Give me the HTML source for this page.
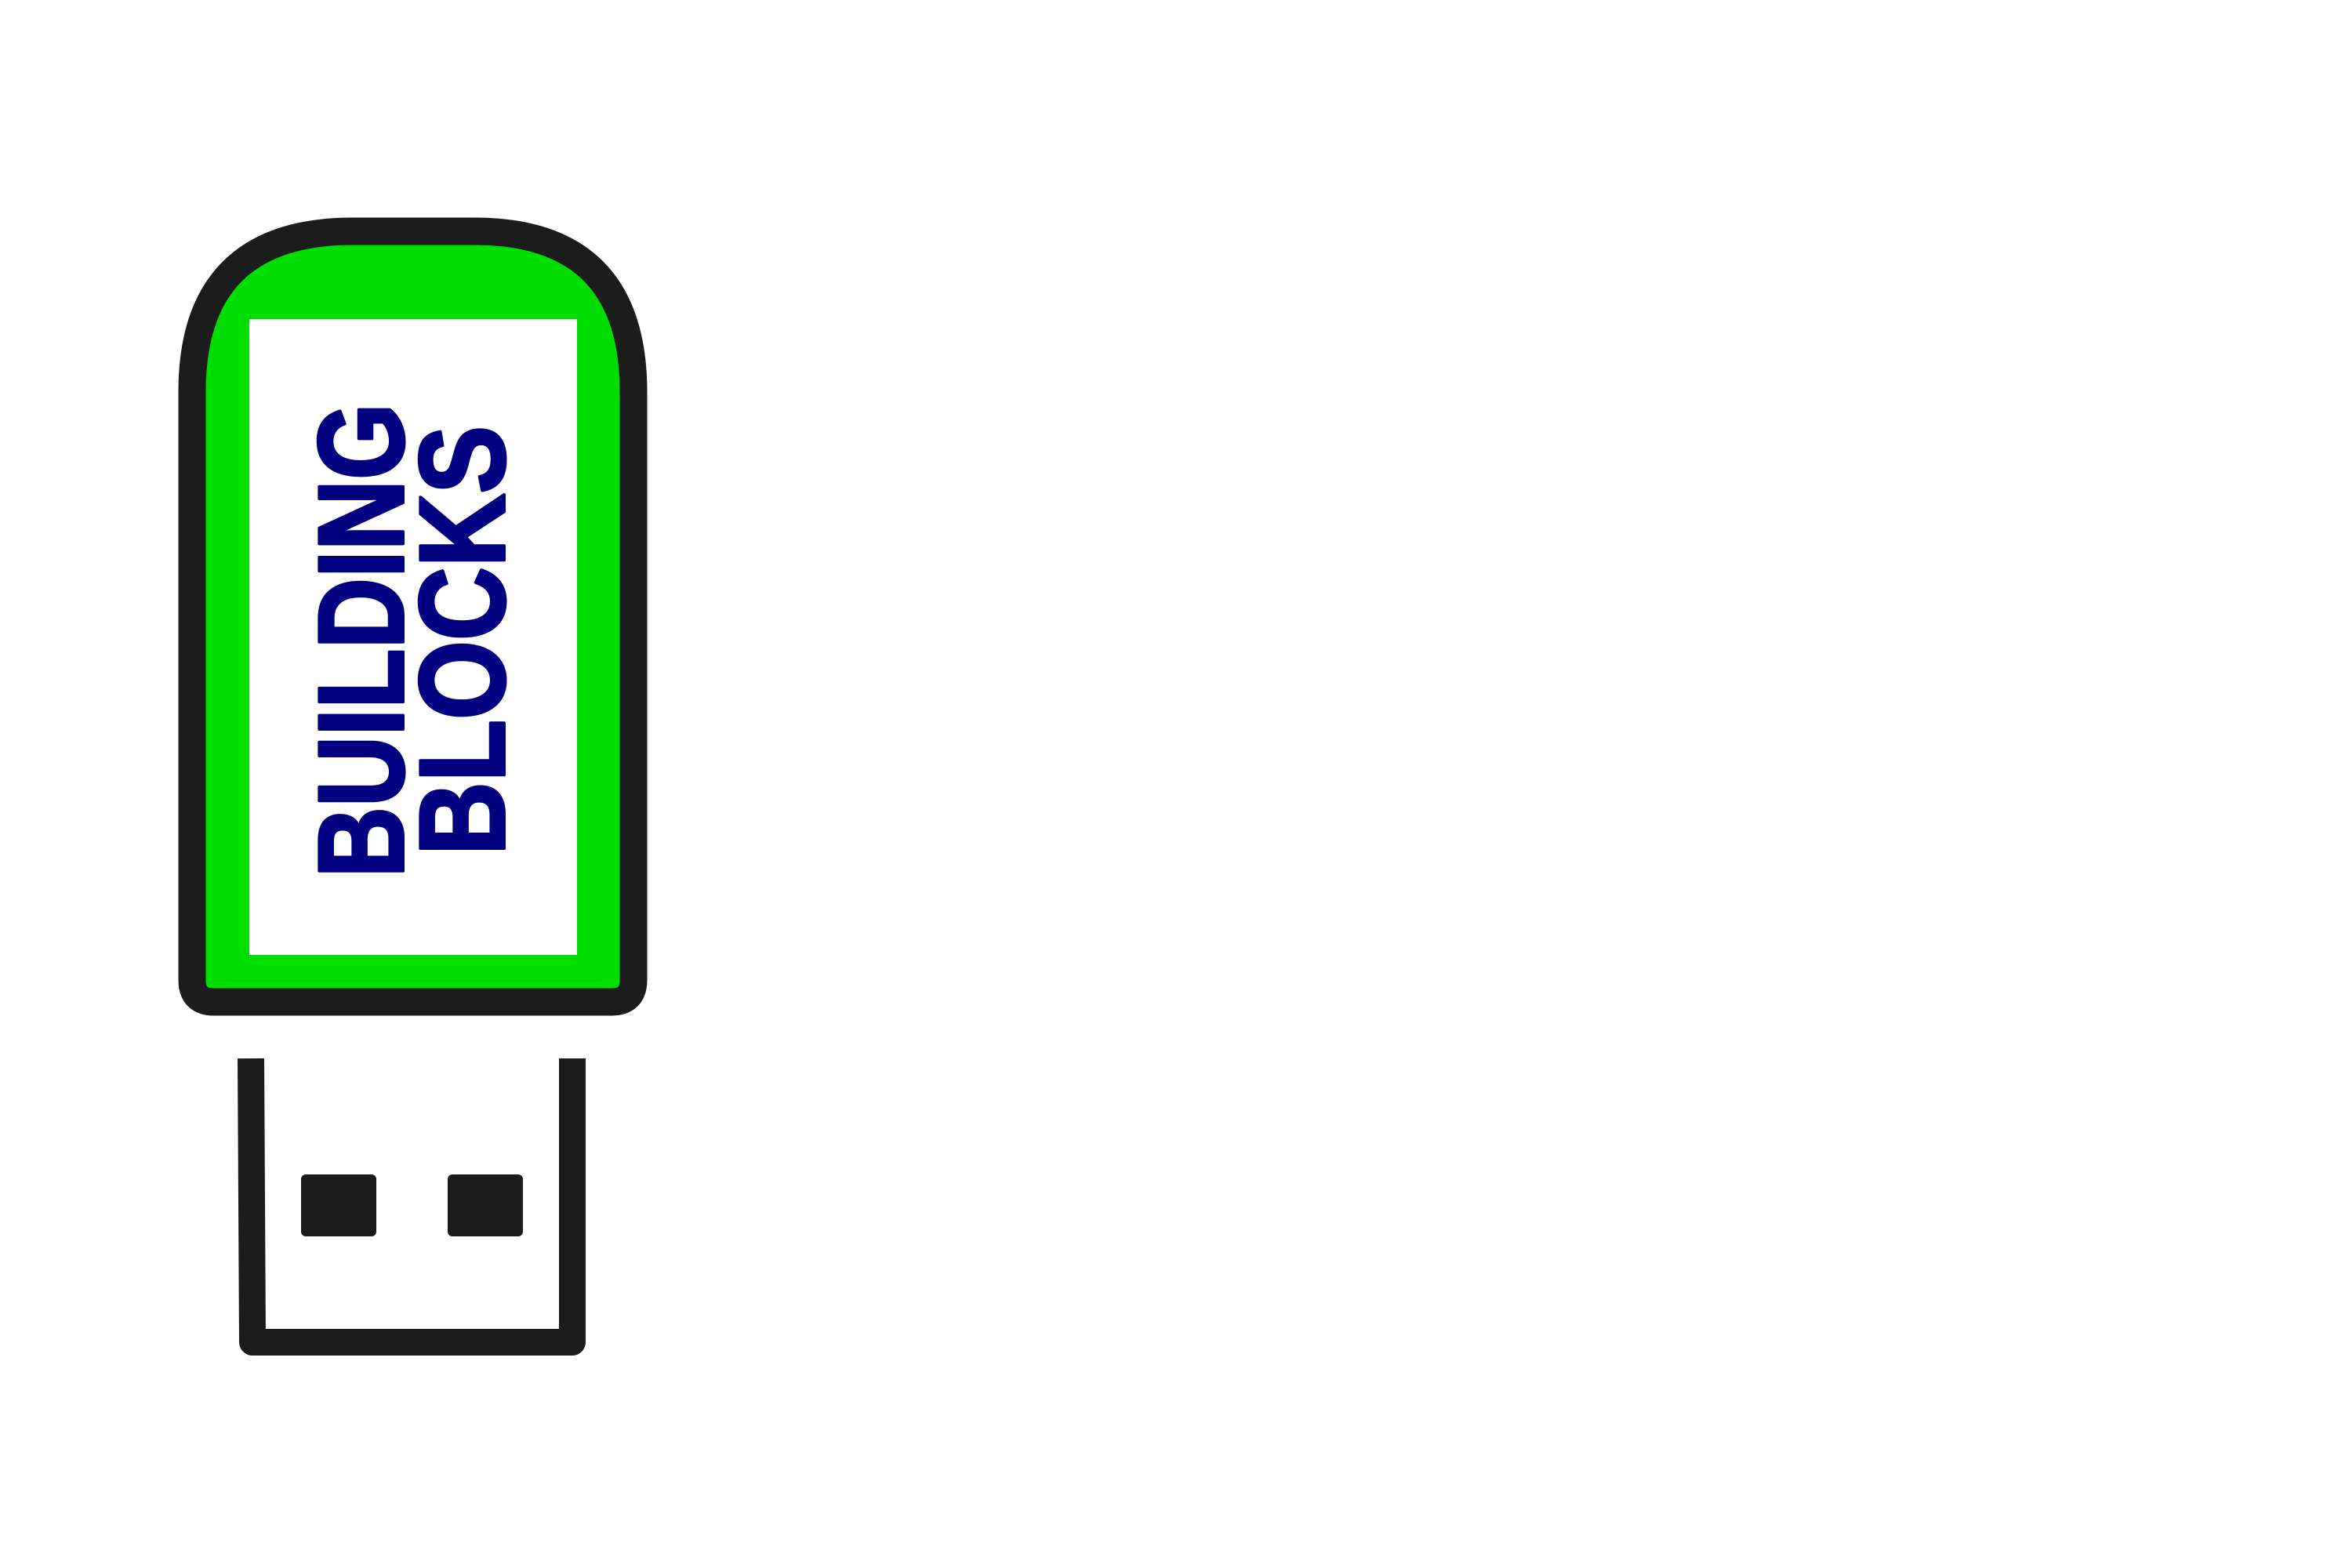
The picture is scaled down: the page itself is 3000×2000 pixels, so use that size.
<!DOCTYPE html>
<html>
<head>
<meta charset="utf-8">
<style>
html,body{margin:0;padding:0;background:#fff;}
svg{display:block;}
</style>
</head>
<body>
<svg width="3000" height="2000" viewBox="0 0 3000 2000" xmlns="http://www.w3.org/2000/svg">
  <rect width="3000" height="2000" fill="#fff"/>
  <path d="M245,1250 L245,500 Q245,295 450,295 L605,295 Q808,295 808,500 L808,1250 Q808,1278 780,1278 L273,1278 Q245,1278 245,1250 Z" fill="#00dd00" stroke="#1c1c1c" stroke-width="35" stroke-linejoin="round"/>
  <rect x="318" y="407" width="418" height="811" fill="#fff"/>
  <g font-family="'Liberation Sans', sans-serif" font-weight="bold" fill="#000080" stroke="#000080" stroke-width="4" stroke-linejoin="round">
    <text transform="translate(514,817) rotate(-90)" text-anchor="middle" font-size="155" textLength="605" lengthAdjust="spacingAndGlyphs">BUILDING</text>
    <text transform="translate(643,817) rotate(-90)" text-anchor="middle" font-size="155" textLength="548" lengthAdjust="spacingAndGlyphs">BLOCKS</text>
  </g>
  <path d="M320,1350 L322,1712 L730,1712 L730,1350" fill="none" stroke="#1c1c1c" stroke-width="34" stroke-linejoin="round"/>
  <rect x="384" y="1498" width="96" height="79" rx="6" fill="#1c1c1c"/>
  <rect x="571" y="1498" width="96" height="79" rx="6" fill="#1c1c1c"/>
</svg>
</body>
</html>
